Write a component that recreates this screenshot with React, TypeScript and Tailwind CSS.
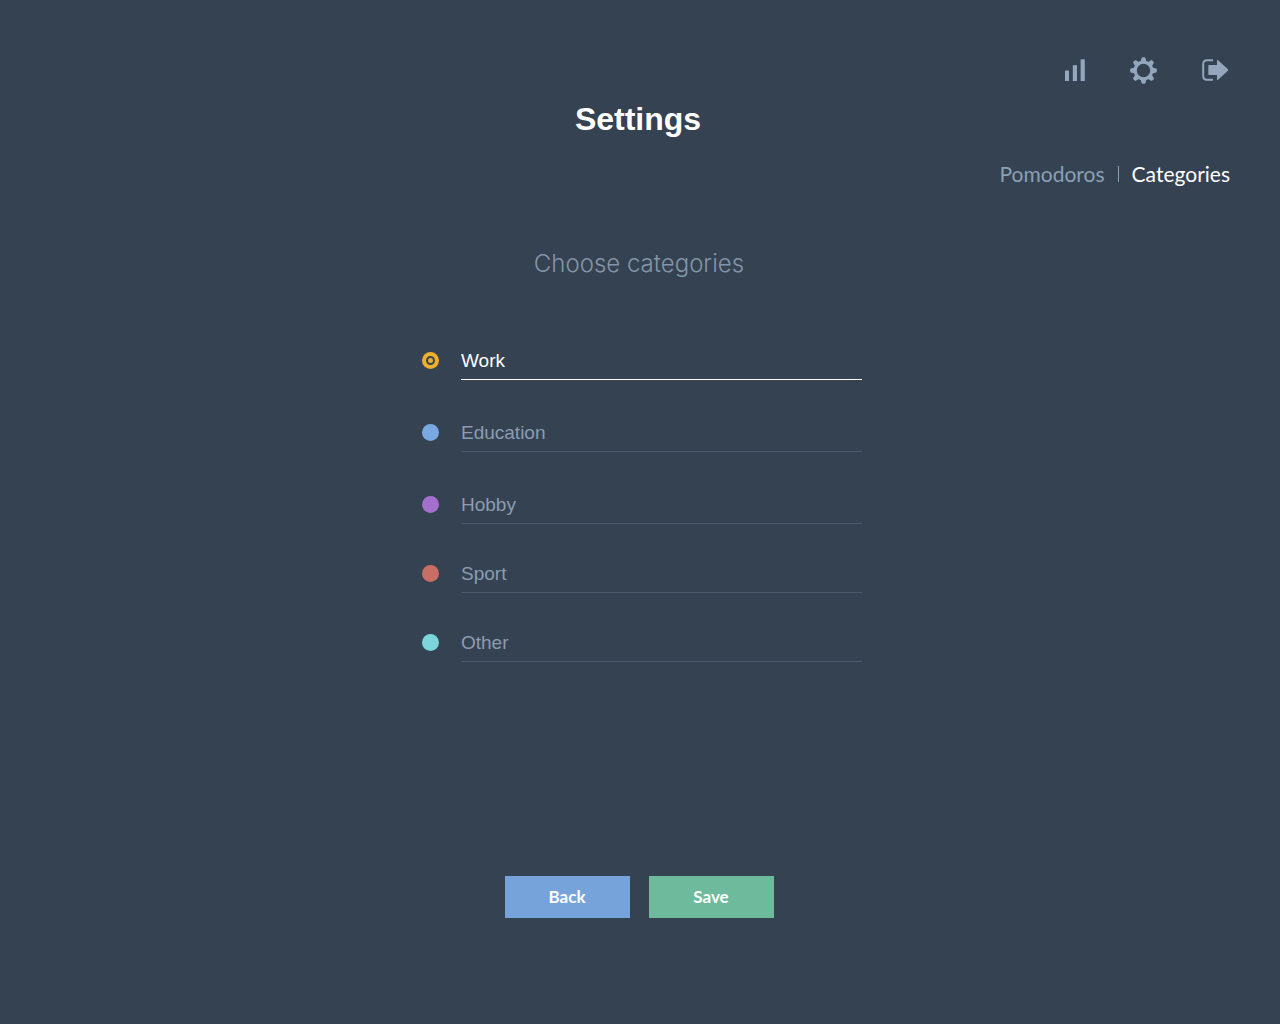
import { useState } from 'react';

type Category = { id: string; name: string; dot: string; gap: string };

const initialCategories: Category[] = [
  { id: 'work', name: 'Work', dot: 'bg-[#edb02c]', gap: '' },
  { id: 'education', name: 'Education', dot: 'bg-[#7aa9e1]', gap: 'mt-8' },
  { id: 'hobby', name: 'Hobby', dot: 'bg-[#a370cd]', gap: 'mt-8' },
  { id: 'sport', name: 'Sport', dot: 'bg-[#c96d65]', gap: 'mt-[29px]' },
  { id: 'other', name: 'Other', dot: 'bg-[#7bd5da]', gap: 'mt-[29px]' },
];

function BarsIcon() {
  return (
    <svg width="20" height="22" viewBox="0 0 20 22" fill="currentColor" aria-hidden="true">
      <rect x="0" y="11.5" width="4" height="10.5" />
      <rect x="7.8" y="6.2" width="4.2" height="15.8" />
      <rect x="15.6" y="0.3" width="4.2" height="21.7" />
    </svg>
  );
}

function GearIcon() {
  return (
    <svg width="27" height="27" viewBox="-13.5 -13.5 27 27" fill="currentColor" aria-hidden="true">
      <circle r="8.3" fill="none" stroke="currentColor" strokeWidth="3.2" />
      {[0, 45, 90, 135, 180, 225, 270, 315].map((angle) => (
        <path
          key={angle}
          transform={`rotate(${angle})`}
          d="M-2.9 -8.9 L-1.9 -12.6 Q-1.7 -13.3 -1 -13.3 H1 Q1.7 -13.3 1.9 -12.6 L2.9 -8.9 Z"
        />
      ))}
    </svg>
  );
}

function ExitIcon() {
  return (
    <svg width="27" height="22" viewBox="0 0 27 22" aria-hidden="true">
      <path
        d="M11 1.2 H5 Q1.2 1.2 1.2 5 V17 Q1.2 20.8 5 20.8 H11"
        fill="none"
        stroke="currentColor"
        strokeWidth="2"
      />
      <path
        d="M7 6 H15 V1.6 Q15 0.2 16.1 1.2 L25.9 10.3 Q26.6 11 25.9 11.7 L16.1 20.8 Q15 21.8 15 20.4 V16 H7 Q6.3 16 6.3 15.3 V6.7 Q6.3 6 7 6 Z"
        fill="currentColor"
      />
    </svg>
  );
}

export default function App() {
  const [categories, setCategories] = useState(initialCategories);
  const [selected, setSelected] = useState('work');

  const rename = (id: string, name: string) =>
    setCategories((list) => list.map((c) => (c.id === id ? { ...c, name } : c)));

  return (
    <div className="min-h-screen bg-[#354251] pb-6 font-['Liberation_Sans',Arial,sans-serif] text-white">
      <header className="pt-14">
        <nav aria-label="Main" className="flex h-7 items-center justify-end pr-[51px] text-[#93a6bc]">
          <a href="#reports" aria-label="Reports">
            <BarsIcon />
          </a>
          <a href="#settings" aria-label="Settings" className="ml-[45px]">
            <GearIcon />
          </a>
          <a href="#logout" aria-label="Log out" className="ml-[45px]">
            <ExitIcon />
          </a>
        </nav>
        <h1 className="mt-[15px] pr-1 text-center text-[32px] leading-10 font-bold">Settings</h1>
        <nav
          aria-label="Settings sections"
          className="mt-[19px] flex h-8 items-center justify-end pr-[50px] font-['Lato',sans-serif] text-[21px]"
        >
          <a href="#pomodoros" className="text-[#8ba0b5]">
            Pomodoros
          </a>
          <span className="mx-[13px] h-4 w-px bg-[#8ba0b5]" />
          <a href="#categories" aria-current="page">
            Categories
          </a>
        </nav>
      </header>

      <main>
        <h2 className="mt-[54px] pr-0.5 text-center font-['Inter',sans-serif] text-2xl leading-10 font-light text-[#8495a9]">
          Choose categories
        </h2>
        <form onSubmit={(e) => e.preventDefault()}>
          <ul className="mx-auto mt-14 w-full max-w-[444px] pl-1">
            {categories.map((c) => (
              <li key={c.id} className={`flex h-10 items-center ${c.gap}`}>
                <label className="relative flex size-[17px] shrink-0">
                  <input
                    type="radio"
                    name="category"
                    aria-label={`Select ${c.name}`}
                    checked={selected === c.id}
                    onChange={() => setSelected(c.id)}
                    className={`size-[17px] cursor-pointer appearance-none rounded-full ${c.dot}`}
                  />
                  {selected === c.id && (
                    <span className="pointer-events-none absolute inset-1 rounded-full border-2 border-[#354251]" />
                  )}
                </label>
                <input
                  type="text"
                  aria-label={`${c.name} category name`}
                  value={c.name}
                  onChange={(e) => rename(c.id, e.target.value)}
                  className={`ml-[22px] h-10 min-w-0 flex-1 border-b bg-transparent pt-0.5 text-[19px] outline-none ${
                    selected === c.id ? 'border-white text-white' : 'border-[#4b5869] text-[#8b9cb1]'
                  }`}
                />
              </li>
            ))}
          </ul>
          <div className="mt-[214px] flex justify-center gap-[19px] pr-0.5 font-['Lato',sans-serif] text-[17px] font-bold">
            <button type="button" className="h-[42px] w-[125px] cursor-pointer bg-[#76a4da]">
              Back
            </button>
            <button type="submit" className="h-[42px] w-[125px] cursor-pointer bg-[#6dba9c]">
              Save
            </button>
          </div>
        </form>
      </main>
    </div>
  );
}
